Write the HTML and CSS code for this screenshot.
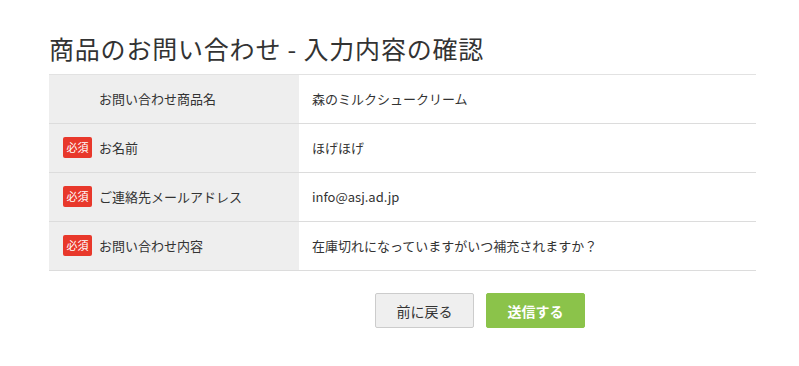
FILE: index.html
```html
<!DOCTYPE html>
<html lang="ja">
<head>
  <meta charset="UTF-8">
  <title>商品のお問い合わせ - 入力内容の確認</title>
  <link rel="stylesheet" href="styles.css">
</head>
<body>
<div class="wrap">
  <h1 class="title">商品のお問い合わせ - 入力内容の確認</h1>
  <table class="confirm">
    <tr>
      <th><span class="label">お問い合わせ商品名</span></th>
      <td>森のミルクシュークリーム</td>
    </tr>
    <tr>
      <th><span class="req">必須</span><span class="label">お名前</span></th>
      <td>ほげほげ</td>
    </tr>
    <tr>
      <th><span class="req">必須</span><span class="label">ご連絡先メールアドレス</span></th>
      <td>info@asj.ad.jp</td>
    </tr>
    <tr>
      <th><span class="req">必須</span><span class="label">お問い合わせ内容</span></th>
      <td>在庫切れになっていますがいつ補充されますか？</td>
    </tr>
  </table>
  <div class="btns">
    <button class="btn back">前に戻る</button>
    <button class="btn send">送信する</button>
  </div>
</div>
</body>
</html>
```

FILE: styles.css
```css
* {
  padding: 0;
  margin: 0;
  box-sizing: border-box;
}

body {
  background: #fff;
  color: #333;
  font-family: "Noto Sans CJK JP", "Noto Sans", sans-serif;
}

.wrap {
  width: 707px;
  margin-left: 49px;
  padding-top: 32px;
}

.title {
  font-size: 25px;
  font-weight: normal;
  line-height: 32px;
  margin-bottom: 10px;
  letter-spacing: 0.8px;
}

.confirm {
  width: 100%;
  border-collapse: collapse;
  border-top: 1px solid #e2e2e2;
  font-size: 13px;
}

.confirm th,
.confirm td {
  height: 49px;
  border-bottom: 1px solid #dcdcdc;
  text-align: left;
  font-weight: normal;
  vertical-align: middle;
  padding-bottom: 2px;
}

.confirm th {
  width: 250px;
  background: #eee;
  padding-left: 50px;
  position: relative;
}

.confirm td {
  padding-left: 13px;
  background: #fff;
}

.req {
  position: absolute;
  left: 14px;
  top: 50%;
  margin-top: -11px;
  width: 29px;
  height: 21px;
  line-height: 21px;
  border-radius: 2px;
  background: #e8382b;
  color: #fff;
  font-size: 11px;
  text-align: center;
}

.btns {
  display: flex;
  gap: 12px;
  padding-left: 326px;
  margin-top: 22px;
}

.btn {
  width: 99px;
  height: 35px;
  border-radius: 2px;
  font-family: inherit;
  font-size: 14px;
  cursor: pointer;
}

.back {
  background: #efefef;
  border: 1px solid #ccc;
  color: #333;
}

.send {
  background: #8bc34a;
  border: 1px solid #8bc34a;
  color: #fff;
  font-weight: bold;
}
```
